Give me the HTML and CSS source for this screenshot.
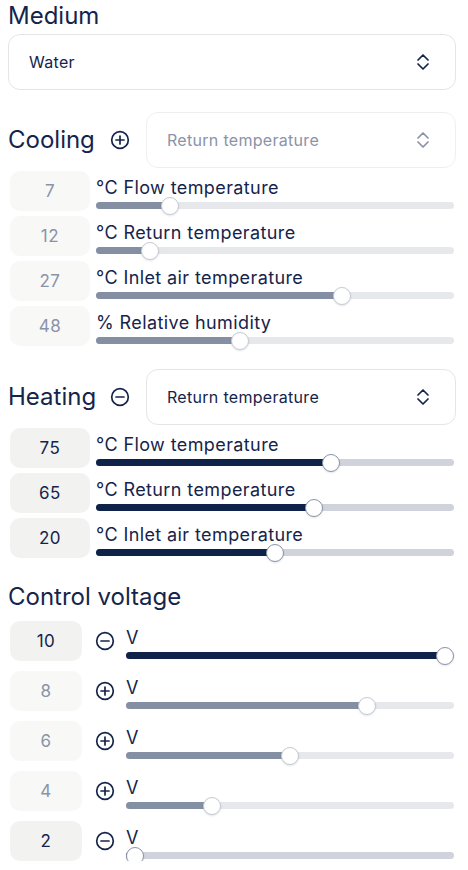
FILE: index.html
```html
<!DOCTYPE html>
<html lang="en">
<head>
<meta charset="utf-8">
<title>Climate settings</title>
<link rel="stylesheet" href="styles.css">
</head>
<body>
<div class="page">
  <h2 class="title">Medium</h2>
  <div class="select select--medium">
    <span>Water</span>
    <svg class="chev" viewBox="0 0 12 16" width="12" height="16"><path d="M1 6 L6 1 L11 6 M1 10 L6 15 L11 10" fill="none" stroke="currentColor" stroke-width="1.7" stroke-linecap="round" stroke-linejoin="round"/></svg>
  </div>

  <section class="group group--cooling">
    <div class="group-head">
      <h2 class="title">Cooling</h2>
      <span class="icon-btn"><svg viewBox="0 0 20 20" width="20" height="20"><circle cx="10" cy="10" r="8.3" fill="none" stroke="currentColor" stroke-width="1.7"/><path d="M10 6 V14 M6 10 H14" stroke="currentColor" stroke-width="1.7" stroke-linecap="round"/></svg></span>
      <div class="select select--muted">
        <span>Return temperature</span>
        <svg class="chev" viewBox="0 0 12 16" width="12" height="16"><path d="M1 6 L6 1 L11 6 M1 10 L6 15 L11 10" fill="none" stroke="currentColor" stroke-width="1.7" stroke-linecap="round" stroke-linejoin="round"/></svg>
      </div>
    </div>
    <div class="rows">
      <div class="row row--muted">
        <div class="value">7</div>
        <div class="slider"><div class="label">°C Flow temperature</div><div class="track" style="--f:0.191"><div class="fill"></div><div class="thumb"></div></div></div>
      </div>
      <div class="row row--muted">
        <div class="value">12</div>
        <div class="slider"><div class="label">°C Return temperature</div><div class="track" style="--f:0.132"><div class="fill"></div><div class="thumb"></div></div></div>
      </div>
      <div class="row row--muted">
        <div class="value">27</div>
        <div class="slider"><div class="label">°C Inlet air temperature</div><div class="track" style="--f:0.697"><div class="fill"></div><div class="thumb"></div></div></div>
      </div>
      <div class="row row--muted">
        <div class="value">48</div>
        <div class="slider"><div class="label">% Relative humidity</div><div class="track" style="--f:0.397"><div class="fill"></div><div class="thumb"></div></div></div>
      </div>
    </div>
  </section>

  <section class="group group--heating">
    <div class="group-head">
      <h2 class="title">Heating</h2>
      <span class="icon-btn"><svg viewBox="0 0 20 20" width="20" height="20"><circle cx="10" cy="10" r="8.3" fill="none" stroke="currentColor" stroke-width="1.7"/><path d="M6 10 H14" stroke="currentColor" stroke-width="1.7" stroke-linecap="round"/></svg></span>
      <div class="select">
        <span>Return temperature</span>
        <svg class="chev" viewBox="0 0 12 16" width="12" height="16"><path d="M1 6 L6 1 L11 6 M1 10 L6 15 L11 10" fill="none" stroke="currentColor" stroke-width="1.7" stroke-linecap="round" stroke-linejoin="round"/></svg>
      </div>
    </div>
    <div class="rows">
      <div class="row row--active">
        <div class="value">75</div>
        <div class="slider"><div class="label">°C Flow temperature</div><div class="track" style="--f:0.665"><div class="fill"></div><div class="thumb"></div></div></div>
      </div>
      <div class="row row--active">
        <div class="value">65</div>
        <div class="slider"><div class="label">°C Return temperature</div><div class="track" style="--f:0.615"><div class="fill"></div><div class="thumb"></div></div></div>
      </div>
      <div class="row row--active">
        <div class="value">20</div>
        <div class="slider"><div class="label">°C Inlet air temperature</div><div class="track" style="--f:0.5"><div class="fill"></div><div class="thumb"></div></div></div>
      </div>
    </div>
  </section>

  <section class="group group--voltage">
    <h2 class="title title--voltage">Control voltage</h2>
    <div class="rows rows--voltage">
      <div class="vrow row--active">
        <div class="value">10</div>
        <span class="icon-btn"><svg viewBox="0 0 20 20" width="20" height="20"><circle cx="10" cy="10" r="8.3" fill="none" stroke="currentColor" stroke-width="1.7"/><path d="M6 10 H14" stroke="currentColor" stroke-width="1.7" stroke-linecap="round"/></svg></span>
        <div class="slider"><div class="label">V</div><div class="track" style="--f:1"><div class="fill"></div><div class="thumb"></div></div></div>
      </div>
      <div class="vrow row--muted">
        <div class="value">8</div>
        <span class="icon-btn"><svg viewBox="0 0 20 20" width="20" height="20"><circle cx="10" cy="10" r="8.3" fill="none" stroke="currentColor" stroke-width="1.7"/><path d="M10 6 V14 M6 10 H14" stroke="currentColor" stroke-width="1.7" stroke-linecap="round"/></svg></span>
        <div class="slider"><div class="label">V</div><div class="track" style="--f:0.748"><div class="fill"></div><div class="thumb"></div></div></div>
      </div>
      <div class="vrow row--muted">
        <div class="value">6</div>
        <span class="icon-btn"><svg viewBox="0 0 20 20" width="20" height="20"><circle cx="10" cy="10" r="8.3" fill="none" stroke="currentColor" stroke-width="1.7"/><path d="M10 6 V14 M6 10 H14" stroke="currentColor" stroke-width="1.7" stroke-linecap="round"/></svg></span>
        <div class="slider"><div class="label">V</div><div class="track" style="--f:0.5"><div class="fill"></div><div class="thumb"></div></div></div>
      </div>
      <div class="vrow row--muted">
        <div class="value">4</div>
        <span class="icon-btn"><svg viewBox="0 0 20 20" width="20" height="20"><circle cx="10" cy="10" r="8.3" fill="none" stroke="currentColor" stroke-width="1.7"/><path d="M10 6 V14 M6 10 H14" stroke="currentColor" stroke-width="1.7" stroke-linecap="round"/></svg></span>
        <div class="slider"><div class="label">V</div><div class="track" style="--f:0.248"><div class="fill"></div><div class="thumb"></div></div></div>
      </div>
      <div class="vrow row--active">
        <div class="value">2</div>
        <span class="icon-btn"><svg viewBox="0 0 20 20" width="20" height="20"><circle cx="10" cy="10" r="8.3" fill="none" stroke="currentColor" stroke-width="1.7"/><path d="M6 10 H14" stroke="currentColor" stroke-width="1.7" stroke-linecap="round"/></svg></span>
        <div class="slider"><div class="label">V</div><div class="track" style="--f:0"><div class="fill"></div><div class="thumb"></div></div></div>
      </div>
    </div>
  </section>
</div>
</body>
</html>
```

FILE: styles.css
```css
* { box-sizing: border-box; }

html, body {
  margin: 0;
  padding: 0;
  background: #ffffff;
}

body {
  font-family: Inter, "Noto Sans", sans-serif;
  color: #15244b;
}

.page {
  padding: 2px 12px 0 8px;
  display: flex;
  flex-direction: column;
}

.title {
  margin: 0;
  font-size: 24px;
  font-weight: 400;
  line-height: 28px;
  letter-spacing: 0;
}

.select {
  height: 56px;
  border: 1px solid #e4e5e9;
  border-radius: 12px;
  display: flex;
  align-items: center;
  justify-content: space-between;
  padding: 0 26px 0 20px;
  font-size: 16px;
  letter-spacing: 0.3px;
  color: #15244b;
  background: #fff;
}

.select--medium {
  margin-top: 4px;
}

.select--muted {
  color: #8a93a8;
  border-color: #eeeff1;
}

.chev {
  display: block;
  color: inherit;
}

.group {
  display: flex;
  flex-direction: column;
}

.group--cooling { margin-top: 22px; }
.group--heating { margin-top: 23px; }
.group--voltage { margin-top: 25px; }

.group-head {
  display: flex;
  align-items: center;
}

.group-head .title {
  width: 102px;
}

.group-head .select {
  flex: 1;
  margin-left: 16px;
}

.icon-btn {
  width: 20px;
  height: 20px;
  display: flex;
  align-items: center;
  justify-content: center;
  color: #15244b;
  flex: none;
}

.icon-btn svg { display: block; }

.rows {
  display: flex;
  flex-direction: column;
  gap: 5px;
  margin-top: 3px;
}

.rows--voltage {
  gap: 10px;
  margin-top: 10px;
}

.row {
  display: grid;
  grid-template-columns: 80px 1fr;
  column-gap: 6px;
  margin-left: 2px;
  margin-right: 2px;
}

.vrow {
  display: grid;
  grid-template-columns: 72px 20px 1fr;
  column-gap: 12px;
  align-items: start;
  margin-left: 2px;
  margin-right: 2px;
}

.vrow .icon-btn {
  margin-top: 10px;
  margin-left: 1px;
}

.value {
  height: 40px;
  border-radius: 10px;
  display: flex;
  align-items: center;
  justify-content: center;
  font-size: 17px;
  letter-spacing: 0.5px;
}

.row--muted .value {
  background: #f8f8f7;
  color: #8a93a8;
}

.row--active .value {
  background: #f2f2f1;
  color: #15244b;
}

.slider {
  display: flex;
  flex-direction: column;
}

.label {
  margin-top: 6px;
  line-height: 22px;
  font-size: 18px;
  letter-spacing: 0.4px;
  color: #15244b;
  white-space: nowrap;
}

.track {
  position: relative;
  margin-top: 3px;
  height: 7px;
  border-radius: 4px;
}

.row--muted .track { background: #e7e8ec; }
.row--active .track { background: #d0d3db; }

.fill {
  height: 100%;
  border-radius: 4px;
  width: calc(9px + var(--f) * (100% - 18px));
}

.row--muted .fill { background: #858fa3; }
.row--active .fill { background: #0f2249; }

.thumb {
  position: absolute;
  top: 50%;
  left: calc(var(--f) * (100% - 18px));
  width: 18px;
  height: 18px;
  margin-top: -9px;
  border-radius: 50%;
  background: #fff;
  box-shadow: 0 1px 2px rgba(20, 30, 60, 0.12);
}

.row--muted .thumb { border: 1.3px solid #c6cad3; }
.row--active .thumb { border: 1.3px solid #8a93a8; }
```
